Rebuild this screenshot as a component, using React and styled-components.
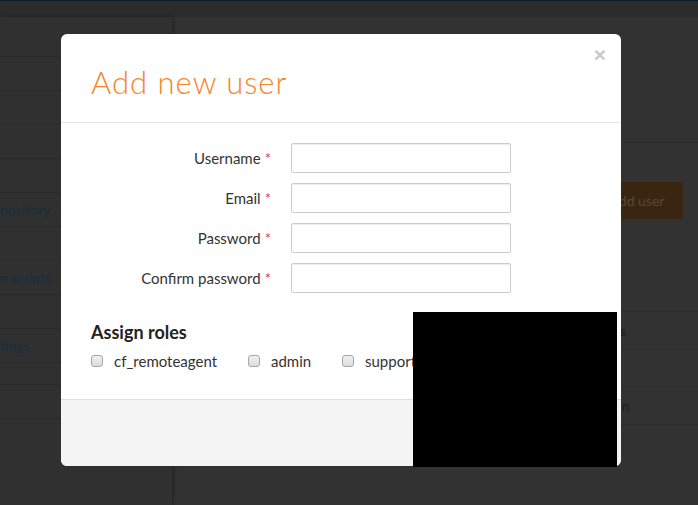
import React from "react";
import styled, { createGlobalStyle } from "styled-components";

const GlobalStyle = createGlobalStyle`
  html, body {
    margin: 0;
    padding: 0;
    background: #323232;
    font-family: Lato, "Open Sans", "Liberation Sans", sans-serif;
  }
  * { box-sizing: border-box; }
`;

const Page = styled.div`
  position: relative;
  width: 698px;
  height: 505px;
  overflow: hidden;
  display: flex;
  flex-direction: column;
  background: #323232;
`;

const TopBar = styled.div`
  height: 17px;
  flex: none;
  border-top: 1px solid #0b1c28;
  background: #2c2c2c;
`;

const Body = styled.div`
  flex: 1;
  display: flex;
`;

const Sidebar = styled.nav`
  width: 172px;
  flex: none;
  background: #303030;
  box-shadow: 1px 0 4px rgba(0, 0, 0, 0.35);
  z-index: 1;
  display: flex;
  flex-direction: column;
`;

const NavItem = styled.div`
  height: ${(p) => p.$h || 34}px;
  border-bottom: 1px solid #292929;
  display: flex;
  align-items: center;
  overflow: hidden;
  white-space: nowrap;
  font-size: 14px;
  color: #182d3a;
`;

const Main = styled.main`
  flex: 1;
  display: flex;
  flex-direction: column;
`;

const MainHeader = styled.div`
  height: 126px;
  border-bottom: 1px solid #292929;
`;

const Toolbar = styled.div`
  display: flex;
  justify-content: flex-end;
  padding: 39px 15px 0 0;
`;

const GhostButton = styled.div`
  width: 92px;
  height: 37px;
  border-radius: 3px;
  background: #3a2511;
  color: #5b4633;
  font-size: 14px;
  display: flex;
  align-items: center;
  justify-content: center;
`;

const Table = styled.div`
  margin-top: 92px;
  margin-left: 18px;
`;

const TableRow = styled.div`
  height: 37.5px;
  border-top: 1px solid #2b2b2b;
  display: grid;
  grid-template-columns: 1fr 106px;
  align-items: center;
  font-size: 14px;
  color: #1f1f1f;
  font-weight: ${(p) => (p.$bold ? 700 : 400)};
`;

const Backdrop = styled.div`
  position: absolute;
  inset: 0;
  z-index: 5;
  pointer-events: none;
`;

const Modal = styled.div`
  position: absolute;
  left: 61px;
  top: 34px;
  width: 560px;
  height: 432px;
  background: #fff;
  border-radius: 6px;
  display: flex;
  flex-direction: column;
  pointer-events: auto;
`;

const ModalHeader = styled.header`
  position: relative;
  height: 89px;
  flex: none;
  border-bottom: 1px solid #e6e6e6;
  padding: 30px 30px 0;
`;

const Title = styled.h2`
  margin: 0;
  font-size: 31px;
  font-weight: 300;
  letter-spacing: 1px;
  line-height: 36px;
  color: #f5842a;
`;

const Close = styled.span`
  position: absolute;
  top: 9px;
  right: 15px;
  font-family: "Liberation Sans", Arial, sans-serif;
  font-size: 21px;
  font-weight: 700;
  line-height: 24px;
  color: #c9c9c9;
`;

const ModalBody = styled.section`
  flex: 1;
  padding: 20px 30px 0;
`;

const FormGrid = styled.div`
  display: grid;
  grid-template-columns: 180px 220px;
  column-gap: 20px;
  row-gap: 10px;
  align-items: center;
`;

const Label = styled.label`
  text-align: right;
  font-size: 15px;
  line-height: 26px;
  color: #333;
  white-space: nowrap;
  i {
    font-style: normal;
    color: #e8403a;
    margin-left: 4px;
  }
`;

const Input = styled.input`
  height: 30px;
  width: 220px;
  border: 1px solid #cccccc;
  border-radius: 2px;
  box-shadow: inset 0 1px 1px rgba(0, 0, 0, 0.075);
  outline: none;
  padding: 4px 8px;
`;

const RolesTitle = styled.h3`
  margin: 29px 0 0;
  font-size: 18px;
  font-weight: 700;
  line-height: 20px;
  color: #222;
`;

const RoleList = styled.div`
  display: flex;
  margin-top: 10px;
  height: 18px;
  align-items: center;
`;

const Role = styled.label`
  display: flex;
  align-items: center;
  width: ${(p) => p.$w}px;
  font-size: 15px;
  color: #333;
`;

const Box = styled.span`
  width: 12px;
  height: 12px;
  margin-right: 11px;
  border: 1px solid #a6a6a6;
  border-radius: 3px;
  background: linear-gradient(#f0f0f0, #dcdcdc);
`;

const Footer = styled.footer`
  height: 67px;
  flex: none;
  background: #f4f4f4;
  border-top: 1px solid #dedede;
  border-radius: 0 0 6px 6px;
`;

const Redaction = styled.div`
  position: absolute;
  left: 352px;
  top: 278px;
  width: 204px;
  height: 155px;
  background: #000;
`;

const fields = ["Username", "Email", "Password", "Confirm password"];
const roles = [
  { name: "cf_remoteagent", w: 157 },
  { name: "admin", w: 94 },
  { name: "support", w: 120 },
];

export default function App() {
  return (
    <>
      <GlobalStyle />
      <Page>
        <TopBar />
        <Body>
          <Sidebar>
            <NavItem $h={40} />
            <NavItem />
            <NavItem />
            <NavItem />
            <NavItem />
            <NavItem>pository</NavItem>
            <NavItem />
            <NavItem>n scripts</NavItem>
            <NavItem />
            <NavItem>tings</NavItem>
            <NavItem $h={22} />
            <NavItem />
          </Sidebar>
          <Main>
            <MainHeader />
            <Toolbar>
              <GhostButton>Add user</GhostButton>
            </Toolbar>
            <Table>
              <TableRow $bold><span /><span>Roles</span></TableRow>
              <TableRow><span /><span /></TableRow>
              <TableRow><span /><span>admin</span></TableRow>
              <TableRow><span /><span /></TableRow>
            </Table>
          </Main>
        </Body>
        <Backdrop>
          <Modal>
            <ModalHeader>
              <Title>Add new user</Title>
              <Close>×</Close>
            </ModalHeader>
            <ModalBody>
              <FormGrid>
                {fields.map((f) => (
                  <React.Fragment key={f}>
                    <Label>
                      {f}
                      <i>*</i>
                    </Label>
                    <Input type={f.toLowerCase().includes("password") ? "password" : "text"} />
                  </React.Fragment>
                ))}
              </FormGrid>
              <RolesTitle>Assign roles</RolesTitle>
              <RoleList>
                {roles.map((r) => (
                  <Role key={r.name} $w={r.w}>
                    <Box />
                    {r.name}
                  </Role>
                ))}
              </RoleList>
            </ModalBody>
            <Footer />
            <Redaction />
          </Modal>
        </Backdrop>
      </Page>
    </>
  );
}
